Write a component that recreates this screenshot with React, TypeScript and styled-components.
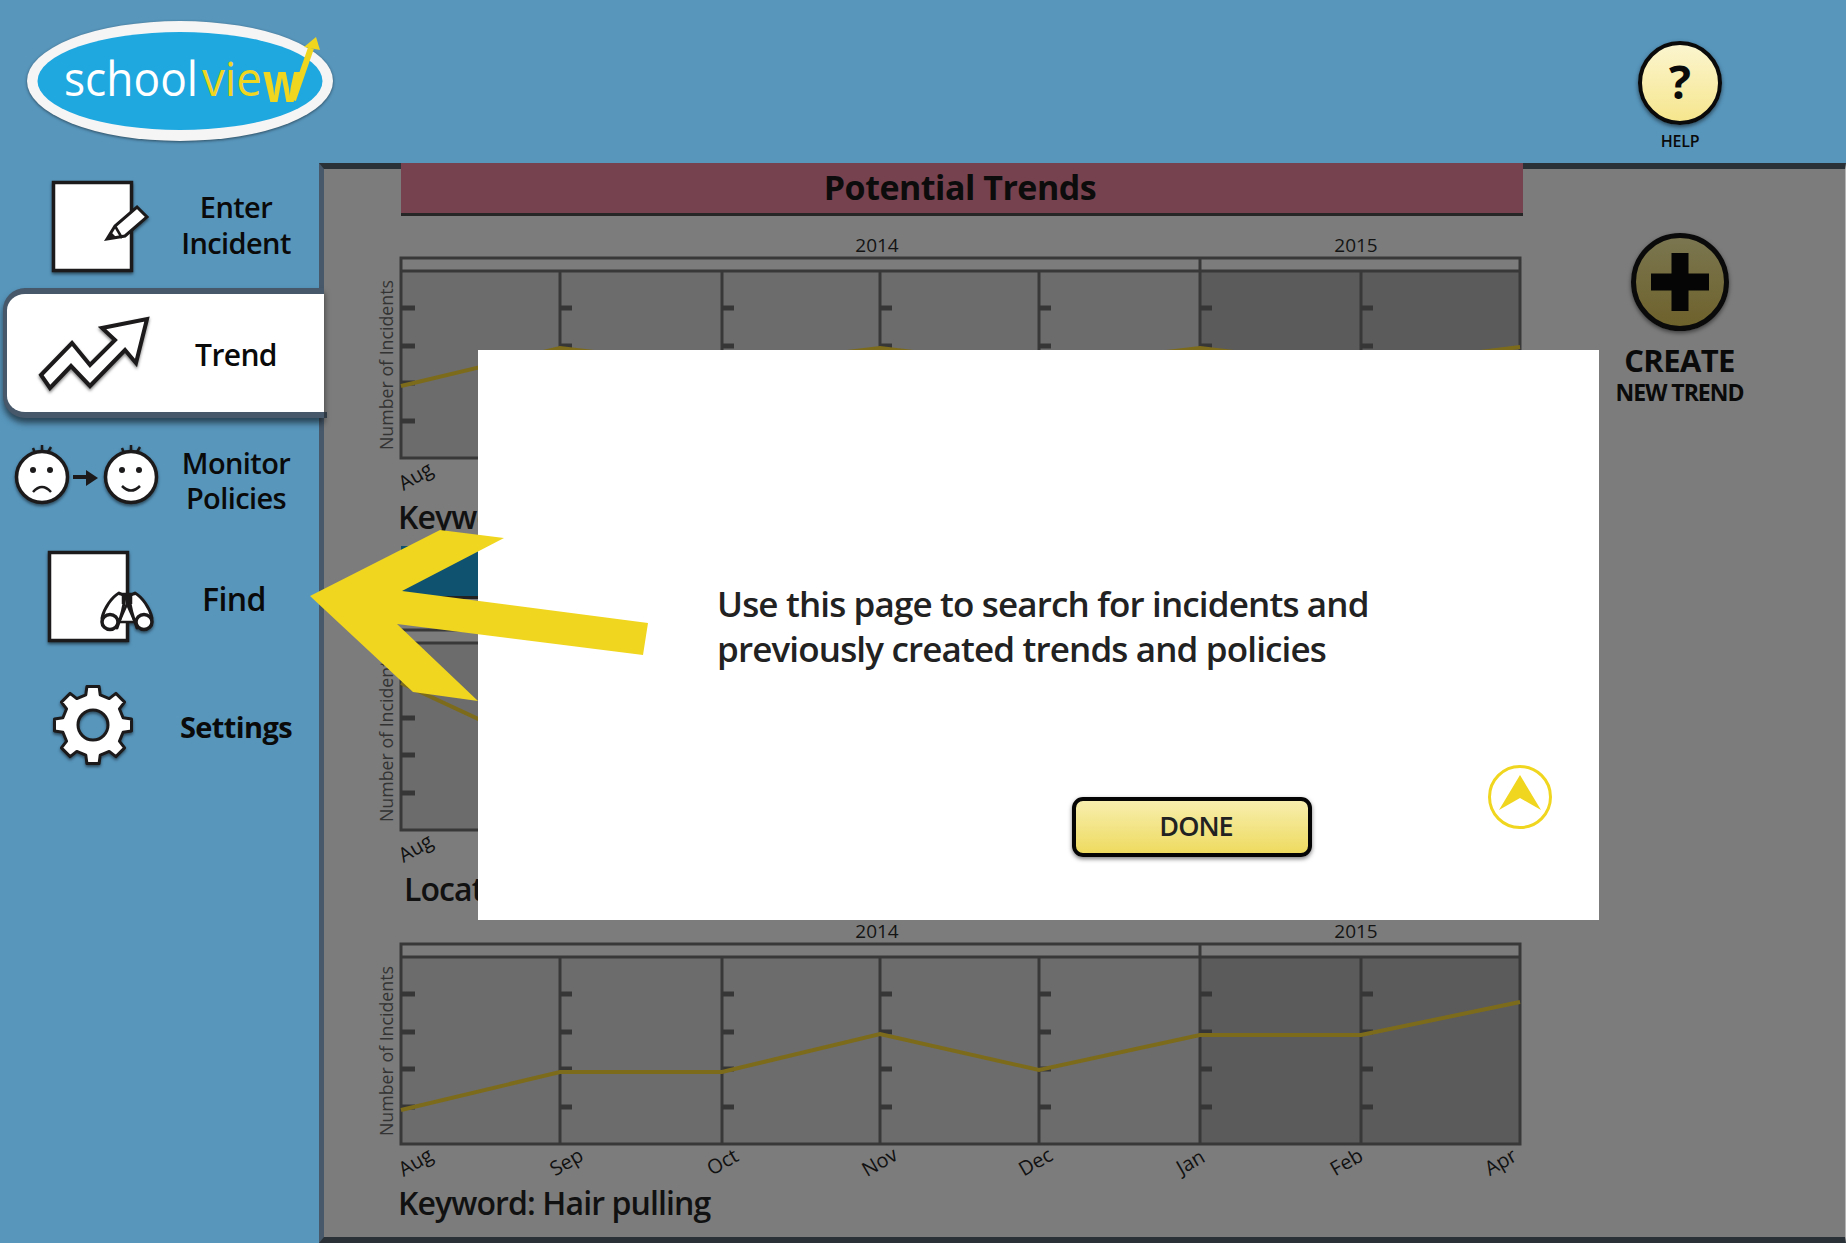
import React from "react";
import styled, { createGlobalStyle } from "styled-components";

const FONT = `"Open Sans", "Noto Sans", "Liberation Sans", sans-serif`;

const Global = createGlobalStyle`
  html, body { margin: 0; padding: 0; background: #5896bc; }
  body { font-family: ${FONT}; overflow: hidden; }
`;

const Page = styled.div`
  position: relative;
  width: 1846px;
  height: 1243px;
  overflow: hidden;
  display: grid;
  grid-template-columns: 319px 1527px;
  grid-template-rows: 163px 1080px;
  background: #5896bc;
`;

const Header = styled.header`
  grid-column: 1 / 3;
  display: flex;
  justify-content: space-between;
  align-items: flex-start;
`;

const HelpColumn = styled.div`
  width: 118px;
  margin-right: 107px;
  padding-top: 41px;
  display: flex;
  flex-direction: column;
  align-items: center;
`;

const HelpButton = styled.div`
  box-sizing: border-box;
  width: 84px;
  height: 84px;
  padding-bottom: 5px;
  border: 4px solid #0a0a0a;
  border-radius: 50%;
  background: linear-gradient(#fbf5cf, #f6e68e);
  box-shadow: 0 2px 4px rgba(0, 0, 0, 0.55);
  display: flex;
  align-items: center;
  justify-content: center;
  font-size: 46px;
  font-weight: 700;
  color: #0a0a0a;
  line-height: 1;
`;

const HelpLabel = styled.div`
  margin-top: 6px;
  font-size: 16px;
  font-weight: 600;
  letter-spacing: -0.2px;
  color: #0a0a0a;
  line-height: 20px;
`;

const Sidebar = styled.nav`
  display: flex;
  flex-direction: column;
  position: relative;
  z-index: 2;
  width: 328px;
`;

const NavItem = styled.div<{ $h: number; $active?: boolean; $mt?: number }>`
  box-sizing: border-box;
  position: relative;
  display: flex;
  align-items: center;
  height: ${(p) => p.$h}px;
  margin-top: ${(p) => p.$mt ?? 0}px;
  ${(p) =>
    p.$active &&
    `
    margin-left: 3px;
    width: 321px;
    background: #fff;
    border: 6px solid #46586a;
    border-left-width: 4px;
    border-right: 0;
    border-radius: 22px 0 0 22px;
    box-shadow: 0 5px 6px rgba(0, 0, 0, 0.55);
    &::after {
      content: "";
      position: absolute;
      left: 317px;
      bottom: -6px;
      width: 3px;
      height: 6px;
      background: #2f3a44;
    }
  `}
`;

const NavIcon = styled.svg<{ $active?: boolean }>`
  flex: none;
  width: 160px;
  margin-left: ${(p) => (p.$active ? -7 : 0)}px;
  overflow: visible;
`;

const NavLabel = styled.div<{ $weight?: number; $size?: number; $dy?: number; $up?: number; $dx?: number }>`
  width: 152px;
  box-sizing: border-box;
  padding-top: ${(p) => p.$dy ?? 0}px;
  padding-bottom: ${(p) => p.$up ?? 0}px;
  padding-right: ${(p) => p.$dx ?? 0}px;
  text-align: center;
  font-size: ${(p) => p.$size ?? 29}px;
  line-height: 35.5px;
  font-weight: ${(p) => p.$weight ?? 600};
  letter-spacing: -0.6px;
  color: #0a0a0a;
`;

const Panel = styled.main`
  box-sizing: border-box;
  display: flex;
  width: 1527px;
  height: 1080px;
  background: #7c7c7c;
  border-top: 6px solid #2a3238;
  border-bottom: 6px solid #2a3238;
  border-left: 5px solid #46586a;
  border-right: 1px solid #b5b5b5;
`;

const Content = styled.div`
  flex: none;
  width: 1199px;
  box-sizing: border-box;
  padding-left: 77px;
  display: flex;
  flex-direction: column;
`;

const TitleBar = styled.h1`
  margin: -6px 0 16px;
  box-sizing: border-box;
  width: 1122px;
  height: 53px;
  padding: 0 4px 3px 0;
  background: #77424f;
  border-bottom: 3px solid #262626;
  display: flex;
  align-items: center;
  justify-content: center;
  font-size: 34px;
  font-weight: 700;
  letter-spacing: -0.5px;
  color: #0c0c0c;
`;

const SelectedBar = styled.div`
  width: 1122px;
  height: 50px;
  margin-top: 10px;
  margin-bottom: 5px;
  background: #0f5270;
  border-bottom: 3px solid #222;
`;

const ChartBlock = styled.section<{ $mt?: number }>`
  margin-top: ${(p) => p.$mt ?? 0}px;
  height: 304px;
`;

const ChartSvg = styled.svg`
  display: block;
  margin-left: -32px;
  overflow: visible;
`;

const Caption = styled.div<{ $x: number }>`
  margin-left: ${(p) => p.$x}px;
  height: 38px;
  line-height: 38px;
  font-size: 32px;
  font-weight: 600;
  letter-spacing: -0.9px;
  color: #111;
  white-space: nowrap;
`;

const RightColumn = styled.aside`
  flex: 1;
  padding: 64px 9px 0 0;
  display: flex;
  flex-direction: column;
  align-items: center;
`;

const CreateButton = styled.div`
  box-sizing: border-box;
  position: relative;
  width: 98px;
  height: 98px;
  border: 5px solid #0a0a0a;
  border-radius: 50%;
  background: linear-gradient(#7b7650, #6e622c);
  box-shadow: 0 2px 4px rgba(0, 0, 0, 0.5);
  display: flex;
  align-items: center;
  justify-content: center;
`;

const CreateTitle = styled.div`
  margin-top: 10px;
  font-size: 31px;
  line-height: 38px;
  font-weight: 700;
  letter-spacing: -0.6px;
  color: #0a0a0a;
`;

const CreateSub = styled.div`
  font-size: 23px;
  line-height: 26px;
  font-weight: 700;
  letter-spacing: -1px;
  color: #0a0a0a;
`;

const Modal = styled.div`
  position: absolute;
  z-index: 3;
  left: 478px;
  top: 350px;
  width: 1121px;
  height: 570px;
  background: #fff;
  box-sizing: border-box;
  padding: 231px 0 0 239px;
`;

const ModalText = styled.p`
  margin: 0;
  font-size: 35px;
  line-height: 45px;
  font-weight: 600;
  letter-spacing: -0.85px;
  color: #222;
  white-space: nowrap;
`;

const ModalActions = styled.div`
  display: flex;
  align-items: flex-start;
  margin: 94px 0 0 355px;
`;

const DoneButton = styled.div`
  box-sizing: border-box;
  width: 240px;
  height: 60px;
  margin-top: 32px;
  border: 4px solid #050505;
  border-radius: 11px;
  background: linear-gradient(#f7eeae, #eedb60);
  box-shadow: 0 2px 4px rgba(0, 0, 0, 0.5);
  display: flex;
  align-items: center;
  justify-content: center;
  padding: 0 0 3px 8px;
  font-size: 27px;
  font-weight: 600;
  letter-spacing: -1px;
  color: #222;
`;

const NextIcon = styled.svg`
  margin-left: 176px;
  flex: none;
`;

const ArrowOverlay = styled.svg`
  position: absolute;
  z-index: 4;
  left: 0;
  top: 0;
  pointer-events: none;
`;

const XS = [0, 159, 321, 479, 638, 799, 960, 1119];
const TICKS = [51, 89, 126, 164];
const MONTHS = [
  ["Aug", 18],
  ["Sep", 169],
  ["Oct", 325],
  ["Nov", 482],
  ["Dec", 638],
  ["Jan", 793],
  ["Feb", 949],
  ["Apr", 1103],
] as const;

const ChartText = styled.text<{ $size: number; $fill: string; $weight?: number }>`
  font-family: ${FONT};
  font-size: ${(p) => p.$size}px;
  font-weight: ${(p) => p.$weight ?? 400};
  fill: ${(p) => p.$fill};
`;

function Chart({ data, monthCount = 8, showYears = true }: { data: number[]; monthCount?: number; showYears?: boolean }) {
  const line = "#383838";
  return (
    <ChartSvg width={1155} height={266} viewBox="-32 -25 1155 266">
      {showYears && (
        <>
          <ChartText x={476} y={-5} textAnchor="middle" $size={19} $fill="#141414" $weight={500}>
            2014
          </ChartText>
          <ChartText x={955} y={-5} textAnchor="middle" $size={19} $fill="#141414" $weight={500}>
            2015
          </ChartText>
        </>
      )}
      <rect x={0} y={14} width={799} height={187} fill="#6c6c6c" />
      <rect x={799} y={14} width={320} height={187} fill="#5b5b5b" />
      <rect x={0} y={1} width={1119} height={200} fill="none" stroke={line} strokeWidth={3} />
      <line x1={0} x2={1119} y1={14} y2={14} stroke={line} strokeWidth={3} />
      <line x1={799} x2={799} y1={1} y2={14} stroke={line} strokeWidth={3} />
      {XS.slice(1, -1).map((x) => (
        <line key={x} x1={x} x2={x} y1={14} y2={201} stroke={line} strokeWidth={3} />
      ))}
      {XS.slice(0, -1).map((x, i) =>
        TICKS.map((y) => <rect key={`${x}-${y}`} x={x} y={y - 2.5} width={i === 0 ? 14 : 12} height={5} fill="#363636" />)
      )}
      <polyline
        points={data.map((y, i) => `${XS[i]},${y}`).join(" ")}
        fill="none"
        stroke="#7d6b1c"
        strokeWidth={4}
      />
      <ChartText
        transform="translate(-8 108) rotate(-90)"
        textAnchor="middle"
        $size={19}
        $fill="#333"
        $weight={500}
        textLength={170}
        lengthAdjust="spacingAndGlyphs"
      >
        Number of Incidents
      </ChartText>
      {MONTHS.slice(0, monthCount).map(([m, x]) => (
        <ChartText key={m} transform={`translate(${x} 225) rotate(-30)`} textAnchor="middle" $size={20} $fill="#111" $weight={500}>
          {m}
        </ChartText>
      ))}
    </ChartSvg>
  );
}

function gearPath(cx: number, cy: number, ro: number, ri: number, teeth: number) {
  const pts: string[] = [];
  const step = (Math.PI * 2) / teeth;
  for (let i = 0; i < teeth; i++) {
    const a = i * step - Math.PI / 2;
    const seq: [number, number][] = [
      [ri, a - step * 0.3],
      [ro, a - step * 0.2],
      [ro, a + step * 0.2],
      [ri, a + step * 0.3],
    ];
    seq.forEach(([r, t]) => pts.push(`${(cx + r * Math.cos(t)).toFixed(1)} ${(cy + r * Math.sin(t)).toFixed(1)}`));
  }
  return `M${pts.join("L")}Z`;
}

const Ink = "#1c1a1a";
const shadow = { filter: "drop-shadow(0 2px 1.5px rgba(0,0,0,.5))" };

function EnterIcon() {
  return (
    <NavIcon height={125} viewBox="0 163 160 125">
      <g style={shadow}>
        <rect x={53.5} y={182.5} width={78} height={88} fill="#fff" stroke={Ink} strokeWidth={3.5} />
        <path d="M107 239 L115 226 L137 207 L147 217 L125 236 Z" fill="#fff" stroke={Ink} strokeWidth={3} strokeLinejoin="miter" />
        <path d="M107 239 L111 232 L117 238 Z" fill={Ink} />
        <path d="M115 226 L122 238" stroke={Ink} strokeWidth={2.5} />
      </g>
    </NavIcon>
  );
}

function TrendIcon() {
  return (
    <NavIcon $active height={118} viewBox="0 294 160 118">
      <polygon
        style={shadow}
        points="41,375 72,343 90,365 115,340 102,328 147,319 136,363 125,350 90,386 71,366 50,388"
        fill="#fff"
        stroke={Ink}
        strokeWidth={4}
      />
    </NavIcon>
  );
}

function Face({ cx, happy }: { cx: number; happy?: boolean }) {
  const cy = 477;
  return (
    <g style={shadow}>
      <path
        d={`M${cx - 9} ${cy - 29} l2 5 M${cx} ${cy - 32} v6 M${cx + 9} ${cy - 30} l-3 5`}
        stroke={Ink}
        strokeWidth={2.5}
        fill="none"
      />
      <circle cx={cx} cy={cy} r={25.5} fill="#fff" stroke={Ink} strokeWidth={3.5} />
      <circle cx={cx - 9} cy={cy - 7} r={3} fill={Ink} />
      <circle cx={cx + 8} cy={cy - 7} r={3} fill={Ink} />
      {happy ? (
        <path d={`M${cx - 9} ${cy + 9} Q${cx} ${cy + 18} ${cx + 9} ${cy + 9}`} fill="none" stroke={Ink} strokeWidth={2.5} />
      ) : (
        <path d={`M${cx - 9} ${cy + 15} Q${cx} ${cy + 5} ${cx + 9} ${cy + 15}`} fill="none" stroke={Ink} strokeWidth={2.5} />
      )}
    </g>
  );
}

function MonitorIcon() {
  return (
    <NavIcon height={115} viewBox="0 420 160 115">
      <Face cx={42} />
      <path d="M73 477 H88" stroke={Ink} strokeWidth={4} />
      <polygon points="86,470 98,478 86,486" fill={Ink} />
      <Face cx={131} happy />
    </NavIcon>
  );
}

function FindIcon() {
  return (
    <NavIcon height={130} viewBox="0 535 160 130">
      <g style={shadow}>
        <rect x={49.5} y={552.5} width={78} height={88} fill="#fff" stroke={Ink} strokeWidth={3.5} />
        <path d="M127 604 L135 622 H119 Z" fill="#fff" stroke={Ink} strokeWidth={2.5} />
        <path d="M119 593 C112 597 104 608 102 618 L117 628 C120 620 124 608 125 596 Z" fill="#fff" stroke={Ink} strokeWidth={3} strokeLinejoin="round" />
        <path d="M135 593 C142 597 150 608 152 618 L137 628 C134 620 130 608 129 596 Z" fill="#fff" stroke={Ink} strokeWidth={3} strokeLinejoin="round" />
        <path d="M119 594 H135 M123 593 V604 M131 593 V604" stroke={Ink} strokeWidth={2.5} fill="none" />
        <ellipse cx={110} cy={622} rx={8} ry={7.5} fill="#fff" stroke={Ink} strokeWidth={3.5} />
        <ellipse cx={144} cy={622} rx={8} ry={7.5} fill="#fff" stroke={Ink} strokeWidth={3.5} />
      </g>
    </NavIcon>
  );
}

function SettingsIcon() {
  return (
    <NavIcon height={125} viewBox="0 665 160 125">
      <path
        style={shadow}
        d={`${gearPath(93, 725, 39, 31, 8)} M108 725 a15 15 0 1 0 -30 0 a15 15 0 1 0 30 0 Z`}
        fillRule="evenodd"
        fill="#fff"
        stroke={Ink}
        strokeWidth={3}
        strokeLinejoin="round"
      />
    </NavIcon>
  );
}

const LogoText = styled.text<{ $fill: string; $weight?: number; $size?: number }>`
  font-family: ${FONT};
  font-size: ${(p) => p.$size ?? 47}px;
  font-weight: ${(p) => p.$weight ?? 500};
  fill: ${(p) => p.$fill};
`;

function Logo() {
  return (
    <svg width={360} height={163} viewBox="0 0 360 163">
      <ellipse cx={180} cy={81} rx={153} ry={60} fill="#f5f5f5" style={{ filter: "drop-shadow(0 1px 1.5px rgba(0,0,0,.5))" }} />
      <ellipse cx={180} cy={81} rx={142.5} ry={49} fill="#1fa7e0" />
      <LogoText x={64} y={96} $fill="#fff" textLength={134} lengthAdjust="spacingAndGlyphs">
        school
      </LogoText>
      <LogoText x={202} y={96} $fill="#f0d61f" textLength={60} lengthAdjust="spacingAndGlyphs">
        vie
      </LogoText>
      <LogoText x={263} y={102} $fill="#f0d61f" $weight={700} $size={56} textLength={38} lengthAdjust="spacingAndGlyphs">
        w
      </LogoText>
      <path d="M293 100 L311 48" stroke="#f0d61f" strokeWidth={6} fill="none" />
      <polygon points="304,47 316,37 320,50" fill="#f0d61f" />
    </svg>
  );
}

export default function App() {
  return (
    <Page>
      <Global />
      <Header>
        <Logo />
        <HelpColumn>
          <HelpButton>?</HelpButton>
          <HelpLabel>HELP</HelpLabel>
        </HelpColumn>
      </Header>
      <Sidebar>
        <NavItem $h={125}>
          <EnterIcon />
          <NavLabel $up={2}>
            Enter
            <br />
            Incident
          </NavLabel>
        </NavItem>
        <NavItem $h={130} $active>
          <TrendIcon />
          <NavLabel $size={30} $dy={3}>
            Trend
          </NavLabel>
        </NavItem>
        <NavItem $h={115} $mt={2}>
          <MonitorIcon />
          <NavLabel $dy={5}>
            Monitor
            <br />
            Policies
          </NavLabel>
        </NavItem>
        <NavItem $h={130}>
          <FindIcon />
          <NavLabel $size={32} $dx={4} $up={2}>
            Find
          </NavLabel>
        </NavItem>
        <NavItem $h={125}>
          <SettingsIcon />
          <NavLabel $weight={700} $up={2}>
            Settings
          </NavLabel>
        </NavItem>
      </Sidebar>
      <Panel>
        <Content>
          <TitleBar>Potential Trends</TitleBar>
          <ChartBlock>
            <Chart data={[129, 91, 110, 91, 110, 91, 110, 90]} monthCount={1} />
            <Caption $x={-3}>Keyword:</Caption>
          </ChartBlock>
          <SelectedBar />
          <ChartBlock>
            <Chart data={[54, 128, 128, 91, 128, 91, 91, 59]} monthCount={1} showYears={false} />
            <Caption $x={3}>Location:</Caption>
          </ChartBlock>
          <ChartBlock $mt={10}>
            <Chart data={[167, 129, 129, 91, 127, 92, 92, 59]} />
            <Caption $x={-3}>Keyword: Hair pulling</Caption>
          </ChartBlock>
        </Content>
        <RightColumn>
          <CreateButton>
            <svg width={58} height={58} viewBox="0 0 58 58">
              <path d="M20.5 0 H37.5 V20.5 H58 V37.5 H37.5 V58 H20.5 V37.5 H0 V20.5 H20.5 Z" fill="#050505" />
            </svg>
          </CreateButton>
          <CreateTitle>CREATE</CreateTitle>
          <CreateSub>NEW TREND</CreateSub>
        </RightColumn>
      </Panel>
      <Modal>
        <ModalText>
          Use this page to search for incidents and
          <br />
          previously created trends and policies
        </ModalText>
        <ModalActions>
          <DoneButton>DONE</DoneButton>
          <NextIcon width={64} height={64} viewBox="0 0 64 64">
            <circle cx={32} cy={32} r={30.5} fill="none" stroke="#f0d61f" strokeWidth={3} />
            <polygon points="32,10 53,45 32,33 11,45" fill="#f0d61f" />
          </NextIcon>
        </ModalActions>
      </Modal>
      <ArrowOverlay width={1846} height={1243} viewBox="0 0 1846 1243">
        <polygon
          points="310,596 440,530 504,538 402,591 648,623 643,655 397,624 478,701 413,692"
          fill="#f0d61f"
        />
      </ArrowOverlay>
    </Page>
  );
}
